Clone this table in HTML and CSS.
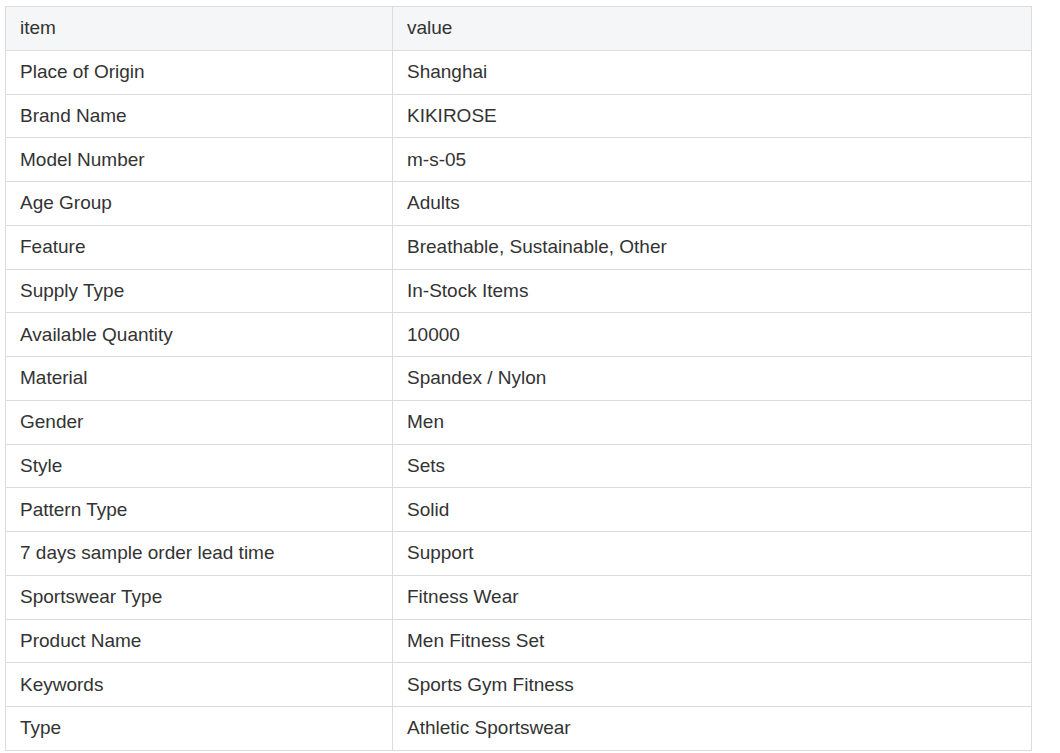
FILE: index.html
```html
<!DOCTYPE html>
<html>
<head>
<meta charset="utf-8">
<link rel="stylesheet" href="styles.css">
</head>
<body>
<table class="spec">
  <tr class="head"><td class="k">item</td><td>value</td></tr>
  <tr><td class="k">Place of Origin</td><td>Shanghai</td></tr>
  <tr><td class="k">Brand Name</td><td>KIKIROSE</td></tr>
  <tr><td class="k">Model Number</td><td>m-s-05</td></tr>
  <tr><td class="k">Age Group</td><td>Adults</td></tr>
  <tr><td class="k">Feature</td><td>Breathable, Sustainable, Other</td></tr>
  <tr><td class="k">Supply Type</td><td>In-Stock Items</td></tr>
  <tr><td class="k">Available Quantity</td><td>10000</td></tr>
  <tr><td class="k">Material</td><td>Spandex / Nylon</td></tr>
  <tr><td class="k">Gender</td><td>Men</td></tr>
  <tr><td class="k">Style</td><td>Sets</td></tr>
  <tr><td class="k">Pattern Type</td><td>Solid</td></tr>
  <tr><td class="k">7 days sample order lead time</td><td>Support</td></tr>
  <tr><td class="k">Sportswear Type</td><td>Fitness Wear</td></tr>
  <tr><td class="k">Product Name</td><td>Men Fitness Set</td></tr>
  <tr><td class="k">Keywords</td><td>Sports Gym Fitness</td></tr>
  <tr><td class="k">Type</td><td>Athletic Sportswear</td></tr>
</table>
</body>
</html>
```
FILE: styles.css
```css
html, body {
  margin: 0;
  padding: 0;
  background: #fff;
}
body {
  padding: 6px 0 0 5px;
  font-family: "Liberation Sans", Arial, sans-serif;
  color: #333;
}
.spec {
  border-collapse: collapse;
  width: 1027px;
  table-layout: fixed;
  font-size: 19px;
}
.spec td {
  border: 1px solid #dcdcdc;
  height: 43.75px;
  padding: 0 0 0 14px;
  box-sizing: border-box;
  vertical-align: middle;
  line-height: 20px;
}
.spec td.k {
  width: 387px;
}
.spec tr.head td {
  background: #f5f6f7;
}
```
